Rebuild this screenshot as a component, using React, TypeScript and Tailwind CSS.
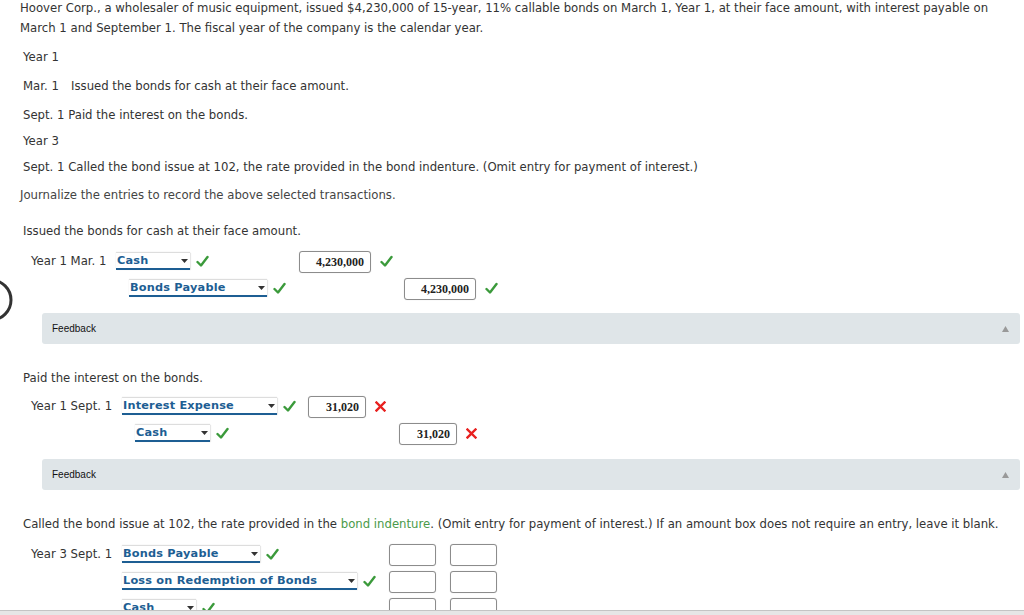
import React from "react";

const font = { fontFamily: '"DejaVu Sans", Verdana, sans-serif' };

function Check() {
  return (
    <svg width="13" height="13" viewBox="0 0 13 13" className="shrink-0">
      <path d="M1.5 7 L5 10.5 L11.5 2" fill="none" stroke="#3b9a3b" strokeWidth="2.4" strokeLinecap="round" strokeLinejoin="round" />
    </svg>
  );
}

function Cross() {
  return (
    <svg width="11" height="11" viewBox="0 0 11 11" className="shrink-0">
      <path d="M1.5 1.5 L9.5 9.5 M9.5 1.5 L1.5 9.5" fill="none" stroke="#e8201f" strokeWidth="2.4" strokeLinecap="square" />
    </svg>
  );
}

function Select({ label, width }: { label: string; width: number }) {
  return (
    <div
      className="relative flex h-[17px] items-center border-b-[2px] border-[#1d5e93] bg-white shadow-[0_-1px_1px_rgba(0,0,0,0.12),1px_0_1px_rgba(0,0,0,0.08)]"
      style={{ width }}
    >
      <span className="pl-[1px] text-[11.3px] font-bold leading-none tracking-[0.2px] text-[#1d5e93]">{label}</span>
      <svg width="7" height="4" viewBox="0 0 7 4" className="absolute right-[2px] top-[6px]">
        <path d="M0 0 L7 0 L3.5 4 Z" fill="#333" />
      </svg>
    </div>
  );
}

function Amount({ value, width }: { value?: string; width: number }) {
  return (
    <div
      className="flex h-[22px] items-center justify-end rounded-[3px] border border-[#8c8c8c] bg-white pr-[6px] shadow-[0_0_1px_rgba(0,0,0,0.2)]"
      style={{ width }}
    >
      <span className="text-[12px] font-bold text-[#222]" style={{ fontFamily: '"Liberation Serif", "Times New Roman", serif' }}>
        {value ?? ""}
      </span>
    </div>
  );
}

function Feedback() {
  return (
    <div className="ml-[42px] mr-[4px] flex h-[31px] items-center justify-between rounded-[3px] bg-[#dfe5e8] pl-[10px] pr-[11px]">
      <span className="text-[10px] text-[#111]" style={{ fontFamily: '"Liberation Sans", Arial, sans-serif' }}>
        Feedback
      </span>
      <svg width="7" height="6" viewBox="0 0 7 6">
        <path d="M0 6 L3.5 0 L7 6 Z" fill="#999" />
      </svg>
    </div>
  );
}

type Row = {
  date?: string;
  account: string;
  accW: number;
  indent?: number;
  debit?: { v?: string; ok?: boolean; w: number } | null;
  credit?: { v?: string; ok?: boolean; w: number } | null;
  checkGap: number;
};

function Entry({
  rows,
  dateW,
  accCol,
  debCol,
}: {
  rows: Row[];
  dateW: number;
  accCol: number;
  debCol: number;
}) {
  return (
    <div className="flex flex-col">
      {rows.map((r, i) => (
        <div key={i} className="flex h-[27px] items-center pl-[31px]">
          <div className="shrink-0 text-[11.7px] text-[#333]" style={{ width: dateW }}>
            {r.date ?? ""}
          </div>
          <div className="flex shrink-0 items-center" style={{ width: accCol, paddingLeft: r.indent ?? 0 }}>
            <Select label={r.account} width={r.accW} />
            <div style={{ width: r.checkGap }} />
            <Check />
          </div>
          <div className="flex shrink-0 items-center gap-[9px]" style={{ width: debCol }}>
            {r.debit ? (
              <>
                <Amount value={r.debit.v} width={r.debit.w} />
                {r.debit.ok === true ? <Check /> : r.debit.ok === false ? <Cross /> : null}
              </>
            ) : null}
          </div>
          <div className="flex shrink-0 items-center gap-[9px]">
            {r.credit ? (
              <>
                <Amount value={r.credit.v} width={r.credit.w} />
                {r.credit.ok === true ? <Check /> : r.credit.ok === false ? <Cross /> : null}
              </>
            ) : null}
          </div>
        </div>
      ))}
    </div>
  );
}

export default function App() {
  return (
    <div className="relative min-h-[615px] w-[1024px] overflow-hidden bg-white text-[11.7px] text-[#333]" style={font}>
      <svg width="30" height="60" viewBox="0 0 30 60" className="absolute left-0 top-[270px]">
        <circle cx="-9" cy="30" r="20" fill="none" stroke="#333" strokeWidth="3" />
      </svg>

      <div className="flex flex-col">
        <p className="-mt-[2px] pl-[20px] pr-[30px] leading-[20px]">
          Hoover Corp., a wholesaler of music equipment, issued $4,230,000 of 15-year, 11% callable bonds on March 1, Year 1, at their face amount, with interest payable on March 1 and September 1. The fiscal year of the company is the calendar year.
        </p>
        <div className="mt-[9px] pl-[23px] leading-[20px]">Year 1</div>
        <div className="mt-[9px] pl-[23px] leading-[20px]">
          <span className="inline-block w-[48px]">Mar. 1</span>Issued the bonds for cash at their face amount.
        </div>
        <div className="mt-[9px] pl-[23px] leading-[20px]">Sept. 1 Paid the interest on the bonds.</div>
        <div className="mt-[6px] pl-[23px] leading-[20px]">Year 3</div>
        <div className="mt-[6px] pl-[23px] leading-[20px]">
          Sept. 1 Called the bond issue at 102, the rate provided in the bond indenture. (Omit entry for payment of interest.)
        </div>
        <div className="mt-[8px] pl-[20px] leading-[20px] text-[#444]">Journalize the entries to record the above selected transactions.</div>

        <div className="mt-[16px] pl-[23px] leading-[20px]">Issued the bonds for cash at their face amount.</div>
        <div className="mt-[7px]">
          <Entry
            dateW={85}
            accCol={183}
            debCol={105}
            rows={[
              { date: "Year 1 Mar. 1", account: "Cash", accW: 74, checkGap: 6, debit: { v: "4,230,000", ok: true, w: 72 }, credit: null },
              { account: "Bonds Payable", accW: 138, indent: 13, checkGap: 6, debit: null, credit: { v: "4,230,000", ok: true, w: 72 } },
            ]}
          />
        </div>
        <div className="mt-[11px]">
          <Feedback />
        </div>

        <div className="mt-[24px] pl-[23px] leading-[20px]">Paid the interest on the bonds.</div>
        <div className="mt-[5px]">
          <Entry
            dateW={91}
            accCol={186}
            debCol={91}
            rows={[
              { date: "Year 1 Sept. 1", account: "Interest Expense", accW: 155, checkGap: 6, debit: { v: "31,020", ok: false, w: 58 }, credit: null },
              { account: "Cash", accW: 75, indent: 13, checkGap: 6, debit: null, credit: { v: "31,020", ok: false, w: 58 } },
            ]}
          />
        </div>
        <div className="mt-[12px]">
          <Feedback />
        </div>

        <div className="mt-[24px] pl-[23px] leading-[20px]">
          Called the bond issue at 102, the rate provided in the <span className="text-[#4a9a4a]">bond indenture</span>. (Omit entry for payment of interest.) If an amount box does not require an entry, leave it blank.
        </div>
        <div className="mt-[7px]">
          <Entry
            dateW={91}
            accCol={267}
            debCol={61}
            rows={[
              { date: "Year 3 Sept. 1", account: "Bonds Payable", accW: 138, checkGap: 6, debit: { w: 47 }, credit: { w: 47 } },
              { account: "Loss on Redemption of Bonds", accW: 235, checkGap: 6, debit: { w: 47 }, credit: { w: 47 } },
              { account: "Cash", accW: 74, checkGap: 6, debit: { w: 47 }, credit: { w: 47 } },
            ]}
          />
        </div>
      </div>

      <div className="absolute left-0 top-[610px] h-[5px] w-full border-t border-[#c4c4c4] bg-[#e6e6e6]" />
    </div>
  );
}
